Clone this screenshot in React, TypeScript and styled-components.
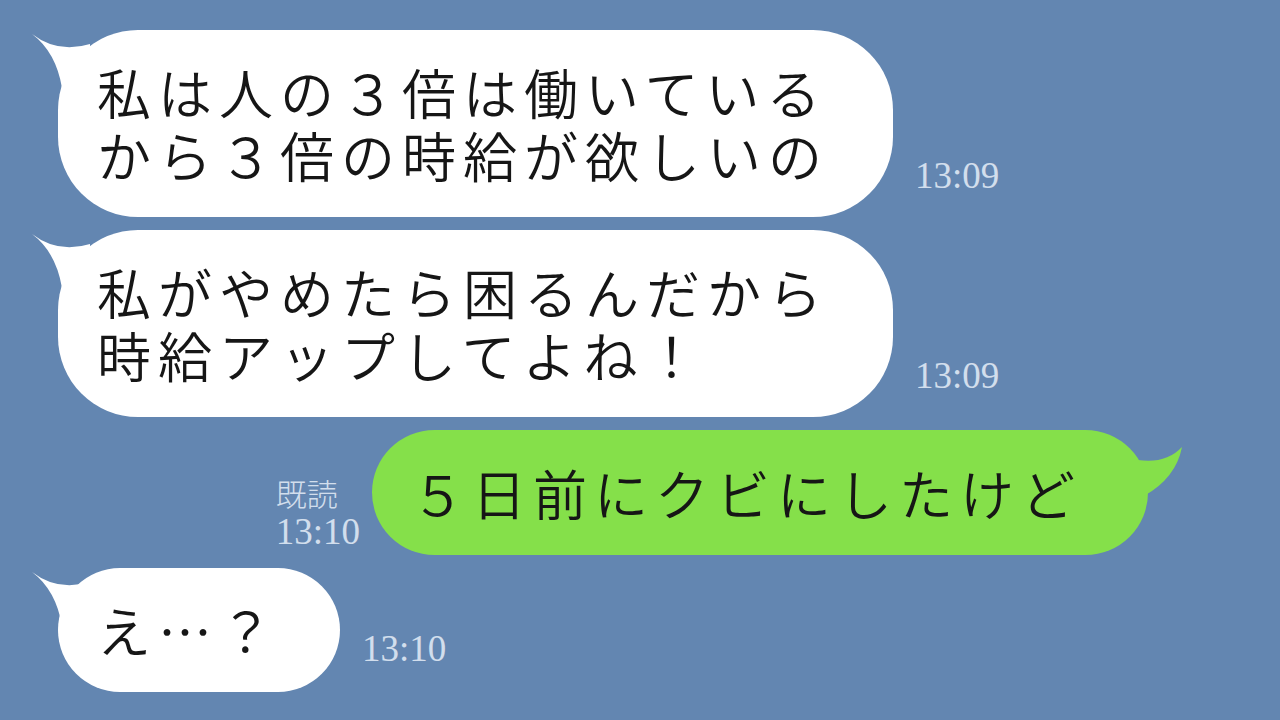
import React from "react";
import styled, { createGlobalStyle } from "styled-components";

const GlobalStyle = createGlobalStyle`
  html, body {
    margin: 0;
    padding: 0;
    background: #6386b1;
  }
  body {
    width: 1280px;
    height: 720px;
    overflow: hidden;
  }
`;

const Chat = styled.div`
  display: flex;
  flex-direction: column;
  gap: 13px;
  padding-top: 30px;
  width: 1280px;
  height: 720px;
  box-sizing: border-box;
  background: #6386b1;
  font-family: "Noto Sans CJK JP", "Noto Sans", sans-serif;
`;

const Row = styled.div<{ $mine?: boolean }>`
  display: flex;
  align-items: flex-end;
  justify-content: ${(p) => (p.$mine ? "flex-end" : "flex-start")};
  gap: ${(p) => (p.$mine ? "12px" : "22px")};
  padding: ${(p) => (p.$mine ? "0 132px 0 0" : "0 0 0 58px")};
`;

const Bubble = styled.div<{ $mine?: boolean; $tight?: boolean }>`
  position: relative;
  background: ${(p) => (p.$mine ? "#85e04a" : "#ffffff")};
  border-radius: 80px;
  padding: ${(p) =>
    p.$mine ? "31px 66px 31px 39px" : `30px ${p.$tight ? 60 : 64}px 31px 39px`};
  color: #161616;
  font-size: 54px;
  font-weight: 350;
  letter-spacing: 7px;
  line-height: 63px;
  white-space: nowrap;
`;

const Line = styled.div`
  position: relative;
  z-index: 1;
  height: 63px;
`;

const TailLeft = styled.svg`
  position: absolute;
  left: -30px;
  top: 0;
  width: 66px;
  height: 72px;
`;

const TailRight = styled.svg`
  position: absolute;
  right: -50px;
  top: 0;
  width: 60px;
  height: 80px;
`;

const Time = styled.div<{ $bottom: number }>`
  font-family: "Liberation Serif", "DejaVu Serif", serif;
  font-size: 37px;
  line-height: 38px;
  color: #e6eef8;
  opacity: 0.85;
  margin-bottom: ${(p) => p.$bottom}px;
`;

const Meta = styled.div`
  display: flex;
  flex-direction: column;
  align-items: flex-start;
  margin-bottom: 4px;
`;

const ReadMark = styled.div`
  font-family: "Noto Sans CJK JP", sans-serif;
  font-weight: 300;
  font-size: 31px;
  line-height: 36px;
  color: #e6eef8;
  opacity: 0.85;
  margin-bottom: 2px;
`;

function Incoming({
  lines,
  time,
  bottom,
  tight,
}: {
  lines: string[];
  time: string;
  bottom: number;
  tight?: boolean;
}) {
  return (
    <Row>
      <Bubble $tight={tight}>
        <TailLeft viewBox="0 0 66 72">
          <path d="M4 4 Q30 24 62 14 L62 70 L34 58 Q28 22 4 4 Z" fill="#ffffff" />
        </TailLeft>
        {lines.map((l) => (
          <Line key={l}>{l}</Line>
        ))}
      </Bubble>
      <Time $bottom={bottom}>{time}</Time>
    </Row>
  );
}

export default function App() {
  return (
    <>
      <GlobalStyle />
      <Chat>
        <Incoming
          lines={["私は人の３倍は働いている", "から３倍の時給が欲しいの"]}
          time="13:09"
          bottom={22}
        />
        <Incoming
          lines={["私がやめたら困るんだから", "時給アップしてよね！"]}
          time="13:09"
          bottom={22}
        />
        <Row $mine>
          <Meta>
            <ReadMark>既読</ReadMark>
            <Time $bottom={0}>13:10</Time>
          </Meta>
          <Bubble $mine>
            <TailRight viewBox="0 0 60 80">
              <path d="M44 17 Q38 48 6 66 L0 70 L0 30 Q28 34 44 17 Z" fill="#85e04a" />
            </TailRight>
            <Line>５日前にクビにしたけど</Line>
          </Bubble>
        </Row>
        <Incoming lines={["え…？"]} time="13:10" bottom={24} tight />
      </Chat>
    </>
  );
}
